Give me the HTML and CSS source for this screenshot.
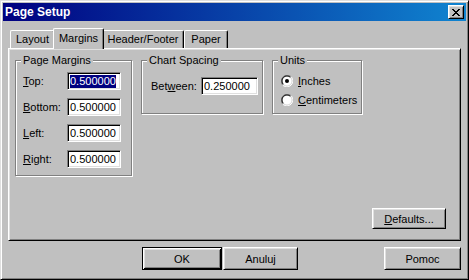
FILE: index.html
```html
<!DOCTYPE html>
<html>
<head>
<meta charset="utf-8">
<title>Page Setup</title>
<link rel="stylesheet" href="styles.css">
</head>
<body>
<div class="window">
  <div class="titlebar">
    <span class="title">Page Setup</span>
    <div class="close">
      <svg width="8" height="7" viewBox="0 0 8 7"><path d="M0 0h2v1h-2zM6 0h2v1h-2zM1 1h2v1h-2zM5 1h2v1h-2zM2 2h4v1h-4zM3 3h2v1h-2zM2 4h4v1h-4zM1 5h2v1h-2zM5 5h2v1h-2zM0 6h2v1h-2zM6 6h2v1h-2z" fill="#000"/></svg>
    </div>
  </div>
  <div class="body">
    <div class="tabs">
      <div class="tab t-layout">Layout</div>
      <div class="tab selected t-margins">Margins</div>
      <div class="tab t-hf">Header/Footer</div>
      <div class="tab t-paper">Paper</div>
    </div>
    <div class="panel">
      <div class="groups">
        <fieldset class="group g-margins">
          <legend>Page Margins</legend>
          <div class="group-body margins-body">
            <div class="field"><span class="lbl"><u>T</u>op:</span><div class="edit"><span class="sel">0.500000</span></div></div>
            <div class="field"><span class="lbl"><u>B</u>ottom:</span><div class="edit">0.500000</div></div>
            <div class="field"><span class="lbl"><u>L</u>eft:</span><div class="edit">0.500000</div></div>
            <div class="field"><span class="lbl"><u>R</u>ight:</span><div class="edit">0.500000</div></div>
          </div>
        </fieldset>
        <fieldset class="group g-spacing">
          <legend>Chart Spacing</legend>
          <div class="group-body spacing-body">
            <div class="field"><span class="lbl lbl-between">Bet<u>w</u>een:</span><div class="edit edit-wide">0.250000</div></div>
          </div>
        </fieldset>
        <fieldset class="group g-units">
          <legend>Units</legend>
          <div class="group-body units-body">
            <div class="radio-row">
              <svg class="radio" width="12" height="12" viewBox="0 0 12 12">
                <circle cx="6" cy="6" r="5" fill="#fff"/>
                <path d="M1.76 10.24A6 6 0 0 1 10.24 1.76" fill="none" stroke="#808080" stroke-width="1"/>
                <path d="M10.24 1.76A6 6 0 0 1 1.76 10.24" fill="none" stroke="#fff" stroke-width="1"/>
                <path d="M2.46 9.54A5 5 0 0 1 9.54 2.46" fill="none" stroke="#000" stroke-width="1"/>
                <path d="M9.54 2.46A5 5 0 0 1 2.46 9.54" fill="none" stroke="#dfdfdf" stroke-width="1"/>
                <circle cx="6" cy="6" r="2" fill="#000"/>
              </svg>
              <span><u>I</u>nches</span>
            </div>
            <div class="radio-row">
              <svg class="radio" width="12" height="12" viewBox="0 0 12 12">
                <circle cx="6" cy="6" r="5" fill="#fff"/>
                <path d="M1.76 10.24A6 6 0 0 1 10.24 1.76" fill="none" stroke="#808080" stroke-width="1"/>
                <path d="M10.24 1.76A6 6 0 0 1 1.76 10.24" fill="none" stroke="#fff" stroke-width="1"/>
                <path d="M2.46 9.54A5 5 0 0 1 9.54 2.46" fill="none" stroke="#000" stroke-width="1"/>
                <path d="M9.54 2.46A5 5 0 0 1 2.46 9.54" fill="none" stroke="#dfdfdf" stroke-width="1"/>
              </svg>
              <span><u>C</u>entimeters</span>
            </div>
          </div>
        </fieldset>
      </div>
      <div class="panel-foot">
        <div class="btn btn-defaults"><span><u>D</u>efaults...</span></div>
      </div>
    </div>
    <div class="actions">
      <div class="btn btn-default btn-ok">OK</div>
      <div class="btn btn-cancel">Anuluj</div>
      <div class="btn btn-help">Pomoc</div>
    </div>
  </div>
</div>
</body>
</html>
```
FILE: styles.css
```css
* { box-sizing: border-box; }

body {
  margin: 0;
  font-family: "Liberation Sans", Arial, sans-serif;
  font-size: 11px;
  color: #000;
  background: #c0c0c0;
}

u { text-decoration: underline; text-underline-offset: 1px; }

.window {
  width: 469px;
  height: 280px;
  display: flex;
  flex-direction: column;
  background: #c0c0c0;
  border: 1px solid;
  border-color: #dfdfdf #000 #000 #dfdfdf;
  box-shadow: inset 1px 1px #fff, inset -1px -1px #808080;
  padding: 2px;
}

.titlebar {
  flex: none;
  height: 18px;
  display: flex;
  align-items: center;
  padding: 0 2px 0 2px;
  background: linear-gradient(to right, #000080, #1084d0);
  color: #fff;
}

.title {
  flex: 1;
  font-weight: bold;
  font-size: 12px;
  line-height: 18px;
}

.close {
  width: 16px;
  height: 14px;
  display: flex;
  align-items: center;
  justify-content: center;
  background: #c0c0c0;
  border: 1px solid;
  border-color: #fff #000 #000 #fff;
  box-shadow: inset 1px 1px #dfdfdf, inset -1px -1px #808080;
}

.body {
  flex: 1;
  display: flex;
  flex-direction: column;
  padding: 7px 5px 7px 5px;
}

.tabs {
  flex: none;
  height: 20px;
  display: flex;
  align-items: flex-end;
  padding-left: 2px;
}

.tab {
  height: 18px;
  display: flex;
  align-items: center;
  justify-content: center;
  background: #c0c0c0;
  border-top: 1px solid #fff;
  border-left: 1px solid #fff;
  border-right: 1px solid #000;
  box-shadow: inset -1px 0 #808080;
  border-radius: 2px 2px 0 0;
  padding-bottom: 1px;
}

.t-layout { width: 45px; }
.t-margins { width: 47px; }
.t-hf { width: 82px; }
.t-paper { width: 44px; }

.tab.selected {
  position: relative;
  z-index: 1;
  width: 51px;
  height: 21px;
  margin: 0 -2px -1px -2px;
  padding-bottom: 3px;
}

.panel {
  flex: none;
  height: 193px;
  display: flex;
  flex-direction: column;
  border: 1px solid;
  border-color: #fff #000 #000 #fff;
  box-shadow: inset 1px 1px #dfdfdf, inset -1px -1px #808080;
  padding: 5px 14px 11px 6px;
}

.groups {
  display: flex;
  align-items: flex-start;
  gap: 9px;
}

.group {
  margin: 0;
  padding: 0;
  min-width: 0;
  border: 1px solid #808080;
  box-shadow: 1px 1px #fff, inset 1px 1px #fff;
}

.group legend {
  margin-left: 5px;
  padding: 0 2px;
  line-height: 13px;
  background: #c0c0c0;
}

.g-margins { width: 117px; height: 122px; }
.g-spacing { width: 122px; height: 60px; }
.g-units { width: 90px; height: 60px; }

.group-body {
  display: flex;
  flex-direction: column;
}

.margins-body { padding: 5px 0 0 7px; gap: 8px; }
.spacing-body { padding: 10px 0 0 9px; }
.units-body { padding: 7px 0 0 8px; gap: 6px; }

.field {
  display: flex;
  align-items: center;
  height: 18px;
}

.lbl { width: 44px; flex: none; }
.lbl-between { width: 50px; }

.edit {
  width: 54px;
  height: 18px;
  flex: none;
  overflow: hidden;
  white-space: nowrap;
  background: #fff;
  border: 1px solid;
  border-color: #808080 #fff #fff #808080;
  box-shadow: inset 1px 1px #000, inset -1px -1px #dfdfdf;
  padding: 0 0 0 2px;
  line-height: 16px;
}

.edit-wide { width: 57px; }

.sel {
  display: inline-block;
  max-width: 46px;
  overflow: hidden;
  vertical-align: top;
  margin-top: 2px;
  line-height: 13px;
  background: #000080;
  color: #fff;
}

.radio-row {
  display: flex;
  align-items: center;
  height: 13px;
  gap: 5px;
}

.radio { flex: none; }

.panel-foot {
  margin-top: auto;
  display: flex;
  justify-content: flex-end;
}

.btn {
  display: flex;
  align-items: center;
  justify-content: center;
  background: #c0c0c0;
  border: 1px solid;
  border-color: #fff #000 #000 #fff;
  box-shadow: inset 1px 1px #dfdfdf, inset -1px -1px #808080;
}

.btn-default {
  border-color: #000;
  box-shadow: inset 1px 1px #fff, inset -1px -1px #000, inset 2px 2px #dfdfdf, inset -2px -2px #808080;
}

.btn-defaults { width: 74px; height: 21px; }

.actions {
  flex: none;
  display: flex;
  margin-top: 6px;
  height: 23px;
}

.btn-ok { width: 80px; margin-left: 134px; }
.btn-cancel { width: 75px; margin-left: 1px; }
.btn-help { width: 77px; margin-left: auto; }
```
